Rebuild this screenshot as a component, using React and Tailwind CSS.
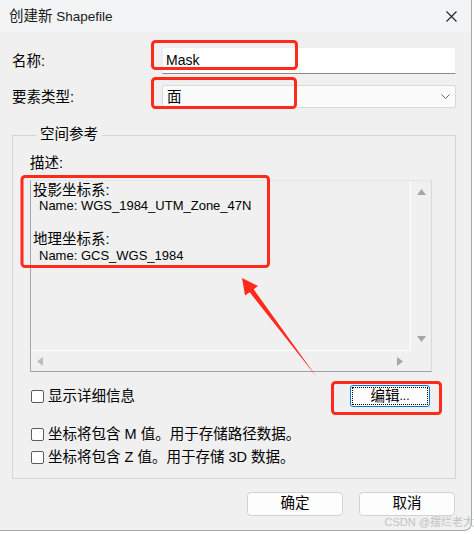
export default function App() {
  const font = "font-['Liberation_Sans','Noto_Sans_CJK_SC',sans-serif]";
  const Check = () => (
    <span className="inline-block w-[13px] h-[13px] border border-[#5c5c5c] rounded-[2px] bg-white shrink-0" />
  );
  return (
    <div className={`relative w-[474px] h-[534px] bg-white text-black ${font}`}>
      <div className="relative w-[472px] h-[531px] bg-[#f0f0f0] border-r border-b border-[#a8a8a8] rounded-br-[8px] overflow-hidden flex flex-col">
        {/* title bar */}
        <div className="h-[32px] shrink-0 flex items-center justify-between pl-[9px] pr-[14px] bg-[#f3f4f6]">
          <div className="text-[14.5px] leading-[20px] text-[#1a1a1a]">
            创建新<span className="text-[13.5px]"> Shapefile</span>
          </div>
          <svg width="11" height="11" viewBox="0 0 11 11">
            <path d="M0.5 0.5 L10.5 10.5 M10.5 0.5 L0.5 10.5" stroke="#222" strokeWidth="1.1" fill="none" />
          </svg>
        </div>

        {/* name row */}
        <div className="mt-[15px] flex items-center h-[27px] pl-[12px] pr-[15px]">
          <div className="w-[150px] text-[14.5px] leading-[20px]">名称:</div>
          <div className="flex-1 h-[27px] bg-white border border-[#ececec] border-b-[#8a8a8a] flex items-center pl-[3px] text-[14px]">
            Mask
          </div>
        </div>

        {/* type row */}
        <div className="mt-[11px] flex items-center h-[23px] pl-[12px] pr-[15px]">
          <div className="w-[150px] text-[14.5px] leading-[20px]">要素类型:</div>
          <div className="flex-1 h-[23px] bg-[#fbfbfb] border border-[#d9d9d9] rounded-[2px] flex items-center justify-between pl-[4px] pr-[5px]">
            <span className="text-[14.5px] leading-[20px]">面</span>
            <svg width="9" height="5" viewBox="0 0 9 5">
              <path d="M0.5 0.5 L4.5 4.5 L8.5 0.5" stroke="#666" strokeWidth="1" fill="none" />
            </svg>
          </div>
        </div>

        {/* group box */}
        <div className="mt-[27px] ml-[12px] mr-[15px] border border-[#d6d6d6] pl-[17px] pr-[23px] pb-[11px] flex flex-col">
          <div className="-mt-[12px] ml-[6px] self-start px-[4px] bg-[#f0f0f0] text-[14.5px] leading-[20px]">空间参考</div>
          <div className="mt-[9px] text-[14.5px] leading-[20px]">描述:</div>

          {/* description box */}
          <div className="mt-[7px] h-[192px] border border-t-[#e6e6e6] border-l-[#a8a8a8] border-b-[#a0a0a0] border-r-[#d8d8d8] grid grid-cols-[1fr_20px] grid-rows-[1fr_20px]">
            <div className="border-r border-b border-white pl-[2px] pt-[1px] text-[14.5px] leading-[16.4px]">
              <div>投影坐标系:</div>
              <div className="pl-[6px] text-[13px]">Name: WGS_1984_UTM_Zone_47N</div>
              <div className="h-[16.4px]" />
              <div>地理坐标系:</div>
              <div className="pl-[6px] text-[13px]">Name: GCS_WGS_1984</div>
            </div>
            <div className="flex flex-col items-center justify-between pt-[8px] pb-[9px]">
              <svg width="9" height="6" viewBox="0 0 9 6"><polygon points="4.5,0 9,6 0,6" fill="#a6a6a6" /></svg>
              <svg width="9" height="6" viewBox="0 0 9 6"><polygon points="0,0 9,0 4.5,6" fill="#a6a6a6" /></svg>
            </div>
            <div className="flex items-center justify-between pl-[6px] pr-[8px]">
              <svg width="6" height="9" viewBox="0 0 6 9"><polygon points="0,4.5 6,0 6,9" fill="#bdbdbd" /></svg>
              <svg width="6" height="9" viewBox="0 0 6 9"><polygon points="0,0 6,4.5 0,9" fill="#a6a6a6" /></svg>
            </div>
            <div />
          </div>

          {/* detail row */}
          <div className="mt-[13px] h-[22px] flex items-center justify-between">
            <div className="flex items-center gap-[4px] ml-[1px]">
              <Check />
              <span className="text-[14.5px] leading-[20px]">显示详细信息</span>
            </div>
            <div className="mr-[2px] w-[80px] h-[22px] bg-[#fdfdfd] border border-[#0078d7] rounded-[3px] p-[1px]">
              <div className="w-full h-full border border-dotted border-black flex items-center justify-center text-[14.5px] leading-[18px]">
                编辑<span className="text-[12px]">...</span>
              </div>
            </div>
          </div>

          <div className="mt-[17px] h-[20px] flex items-center gap-[4px] ml-[1px]">
            <Check />
            <span className="text-[14.5px] leading-[20px]">坐标将包含 M 值。用于存储路径数据。</span>
          </div>
          <div className="mt-[3px] h-[20px] flex items-center gap-[4px] ml-[1px]">
            <Check />
            <span className="text-[14.5px] leading-[20px]">坐标将包含 Z 值。用于存储 3D 数据。</span>
          </div>
        </div>

        {/* buttons */}
        <div className="mt-[13px] flex justify-end gap-[16px] pr-[16px]">
          <div className="w-[96px] h-[24px] bg-[#fdfdfd] border border-[#d2d2d2] rounded-[4px] flex items-center justify-center text-[14.5px]">确定</div>
          <div className="w-[96px] h-[24px] bg-[#fdfdfd] border border-[#d2d2d2] rounded-[4px] flex items-center justify-center text-[14.5px]">取消</div>
        </div>

        {/* annotations */}
        <svg className="absolute left-0 top-0 pointer-events-none" width="472" height="531" viewBox="0 0 472 531">
          <g fill="none" stroke="#ff2a1a" strokeWidth="3">
            <rect x="152.5" y="41.5" width="144" height="27" rx="3" />
            <rect x="152.5" y="78.5" width="143" height="29" rx="3" />
            <rect x="22" y="176.5" width="246.5" height="90" rx="3" />
            <rect x="332.5" y="382.5" width="108" height="31" rx="3" />
          </g>
          <polygon
            points="242,278 258,286 253.7,289.3 317,377.5 249.7,292.3 245,295.5"
            fill="#ff2a1a"
          />
        </svg>
      </div>
      <div className="absolute right-0 bottom-[6px] text-[11px] leading-[12px] text-[#c2c2c2]">CSDN @摆烂老大</div>
    </div>
  );
}
